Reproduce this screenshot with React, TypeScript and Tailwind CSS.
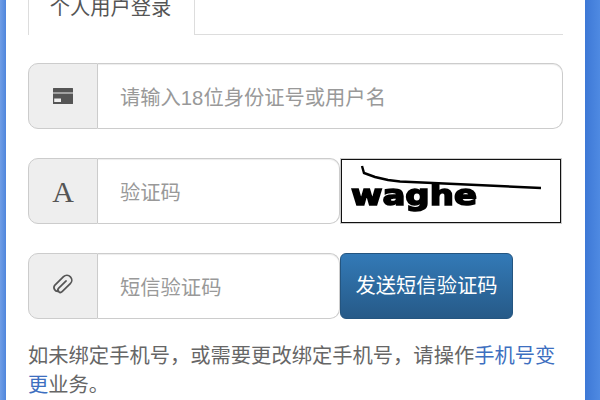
import { ReactNode } from 'react';

const font = "font-['Liberation_Sans','Noto_Sans_CJK_SC',sans-serif]";
const inputClass =
  'flex items-center border border-l-0 border-[#cccccc] pl-[22px] pt-[4px] text-[20.3px] text-[#999999] rounded-r-[10px] shadow-[inset_0_1px_1px_rgba(0,0,0,0.075)]';

type AddonProps = {
  children: ReactNode;
};

const Addon = ({ children }: AddonProps) => (
  <div className="flex w-[70px] shrink-0 items-center justify-center rounded-l-[10px] border border-[#cccccc] bg-[#eeeeee] text-[#555555]">
    {children}
  </div>
);

const App = () => {
  return (
    <div className={`${font} flex h-[400px] w-[600px] overflow-hidden bg-white`}>
      <div className="w-[6px] shrink-0 bg-gradient-to-r from-[#6f9de6] to-[#4f86dc]" />
      <div className="flex min-w-0 flex-1 flex-col pl-[22px] pr-[22px]">
        <div className="-mt-[8px] flex h-[43px] shrink-0 border-b border-[#dddddd]">
          <div className="-mb-px flex w-[167px] items-center justify-center border-x border-[#dddddd] bg-white pb-[11px] pr-[2px] text-[20.3px] text-[#555555]">
            个人用户登录
          </div>
        </div>

        <div className="mt-[28px] flex h-[66px] shrink-0">
          <Addon>
            <svg width="20" height="16" viewBox="0 0 20 16">
              <path d="M0.5 0h19a0.5 0.5 0 0 1 .5 .5v4H0v-4a0.5 0.5 0 0 1 .5-.5z" fill="#555555" />
              <path d="M0 5.6h20v10a0.5 0.5 0 0 1-.5 .5H.5a0.5 0.5 0 0 1-.5-.5zM1.2 10.6v3.4h6.8v-3.4z" fill="#555555" fillRule="evenodd" />
            </svg>
          </Addon>
          <div className={`${inputClass} flex-1`}>请输入18位身份证号或用户名</div>
        </div>

        <div className="mt-[29px] flex h-[66px] shrink-0">
          <Addon>
            <span className="font-['Liberation_Serif',serif] text-[30px]">A</span>
          </Addon>
          <div className={`${inputClass} w-[242px] shrink-0`}>验证码</div>
          <div className="ml-px mt-px h-[64px] w-[220px] shrink-0 border border-[#111111] bg-white outline outline-[#cccccc]">
            <svg width="218" height="62" viewBox="0 0 218 62">
              <path d="M20 6 L22 13 L33 17 L46 20 L58 21.5 L199 28" fill="none" stroke="#000000" strokeWidth="2.4" />
              <text x="9" y="45" className="blur-[0.4px]" fontFamily="DejaVu Sans" fontWeight="700" fontSize="29" fill="#000000" stroke="#000000" strokeWidth="1.6" textLength="126" lengthAdjust="spacingAndGlyphs">waghe</text>
            </svg>
          </div>
        </div>

        <div className="mt-[29px] flex h-[66px] shrink-0">
          <Addon>
            <svg className="-mt-[4px]" width="26" height="26" viewBox="0 0 24 24" fill="none" stroke="#555555" strokeWidth="1.6" strokeLinecap="round">
              <g transform="rotate(46 12 12)">
                <path d="M12 8 V17.5 a2.25 2.25 0 0 0 4.5 0 V7 a4.5 4.5 0 0 0 -9 0 V18 a3.5 3.5 0 0 0 6.5 1.5" />
              </g>
            </svg>
          </Addon>
          <div className={`${inputClass} w-[242px] shrink-0`}>短信验证码</div>
          <div className="flex w-[173px] shrink-0 items-center justify-center rounded-[6px] border border-[#245580] bg-gradient-to-b from-[#337ab7] to-[#265a88] pt-[1px] text-[20.3px] text-white">
            发送短信验证码
          </div>
        </div>

        <p className="mt-[23px] text-[20.3px] leading-[29px] text-[#666666]">
          如未绑定手机号，或需要更改绑定手机号，请操作<span className="text-[#3d6fc0]">手机号变更</span>业务。
        </p>
      </div>
      <div className="w-[15px] shrink-0 bg-gradient-to-r from-[#3d78d6] to-[#4f8ae2]" />
    </div>
  );
};

export default App;
